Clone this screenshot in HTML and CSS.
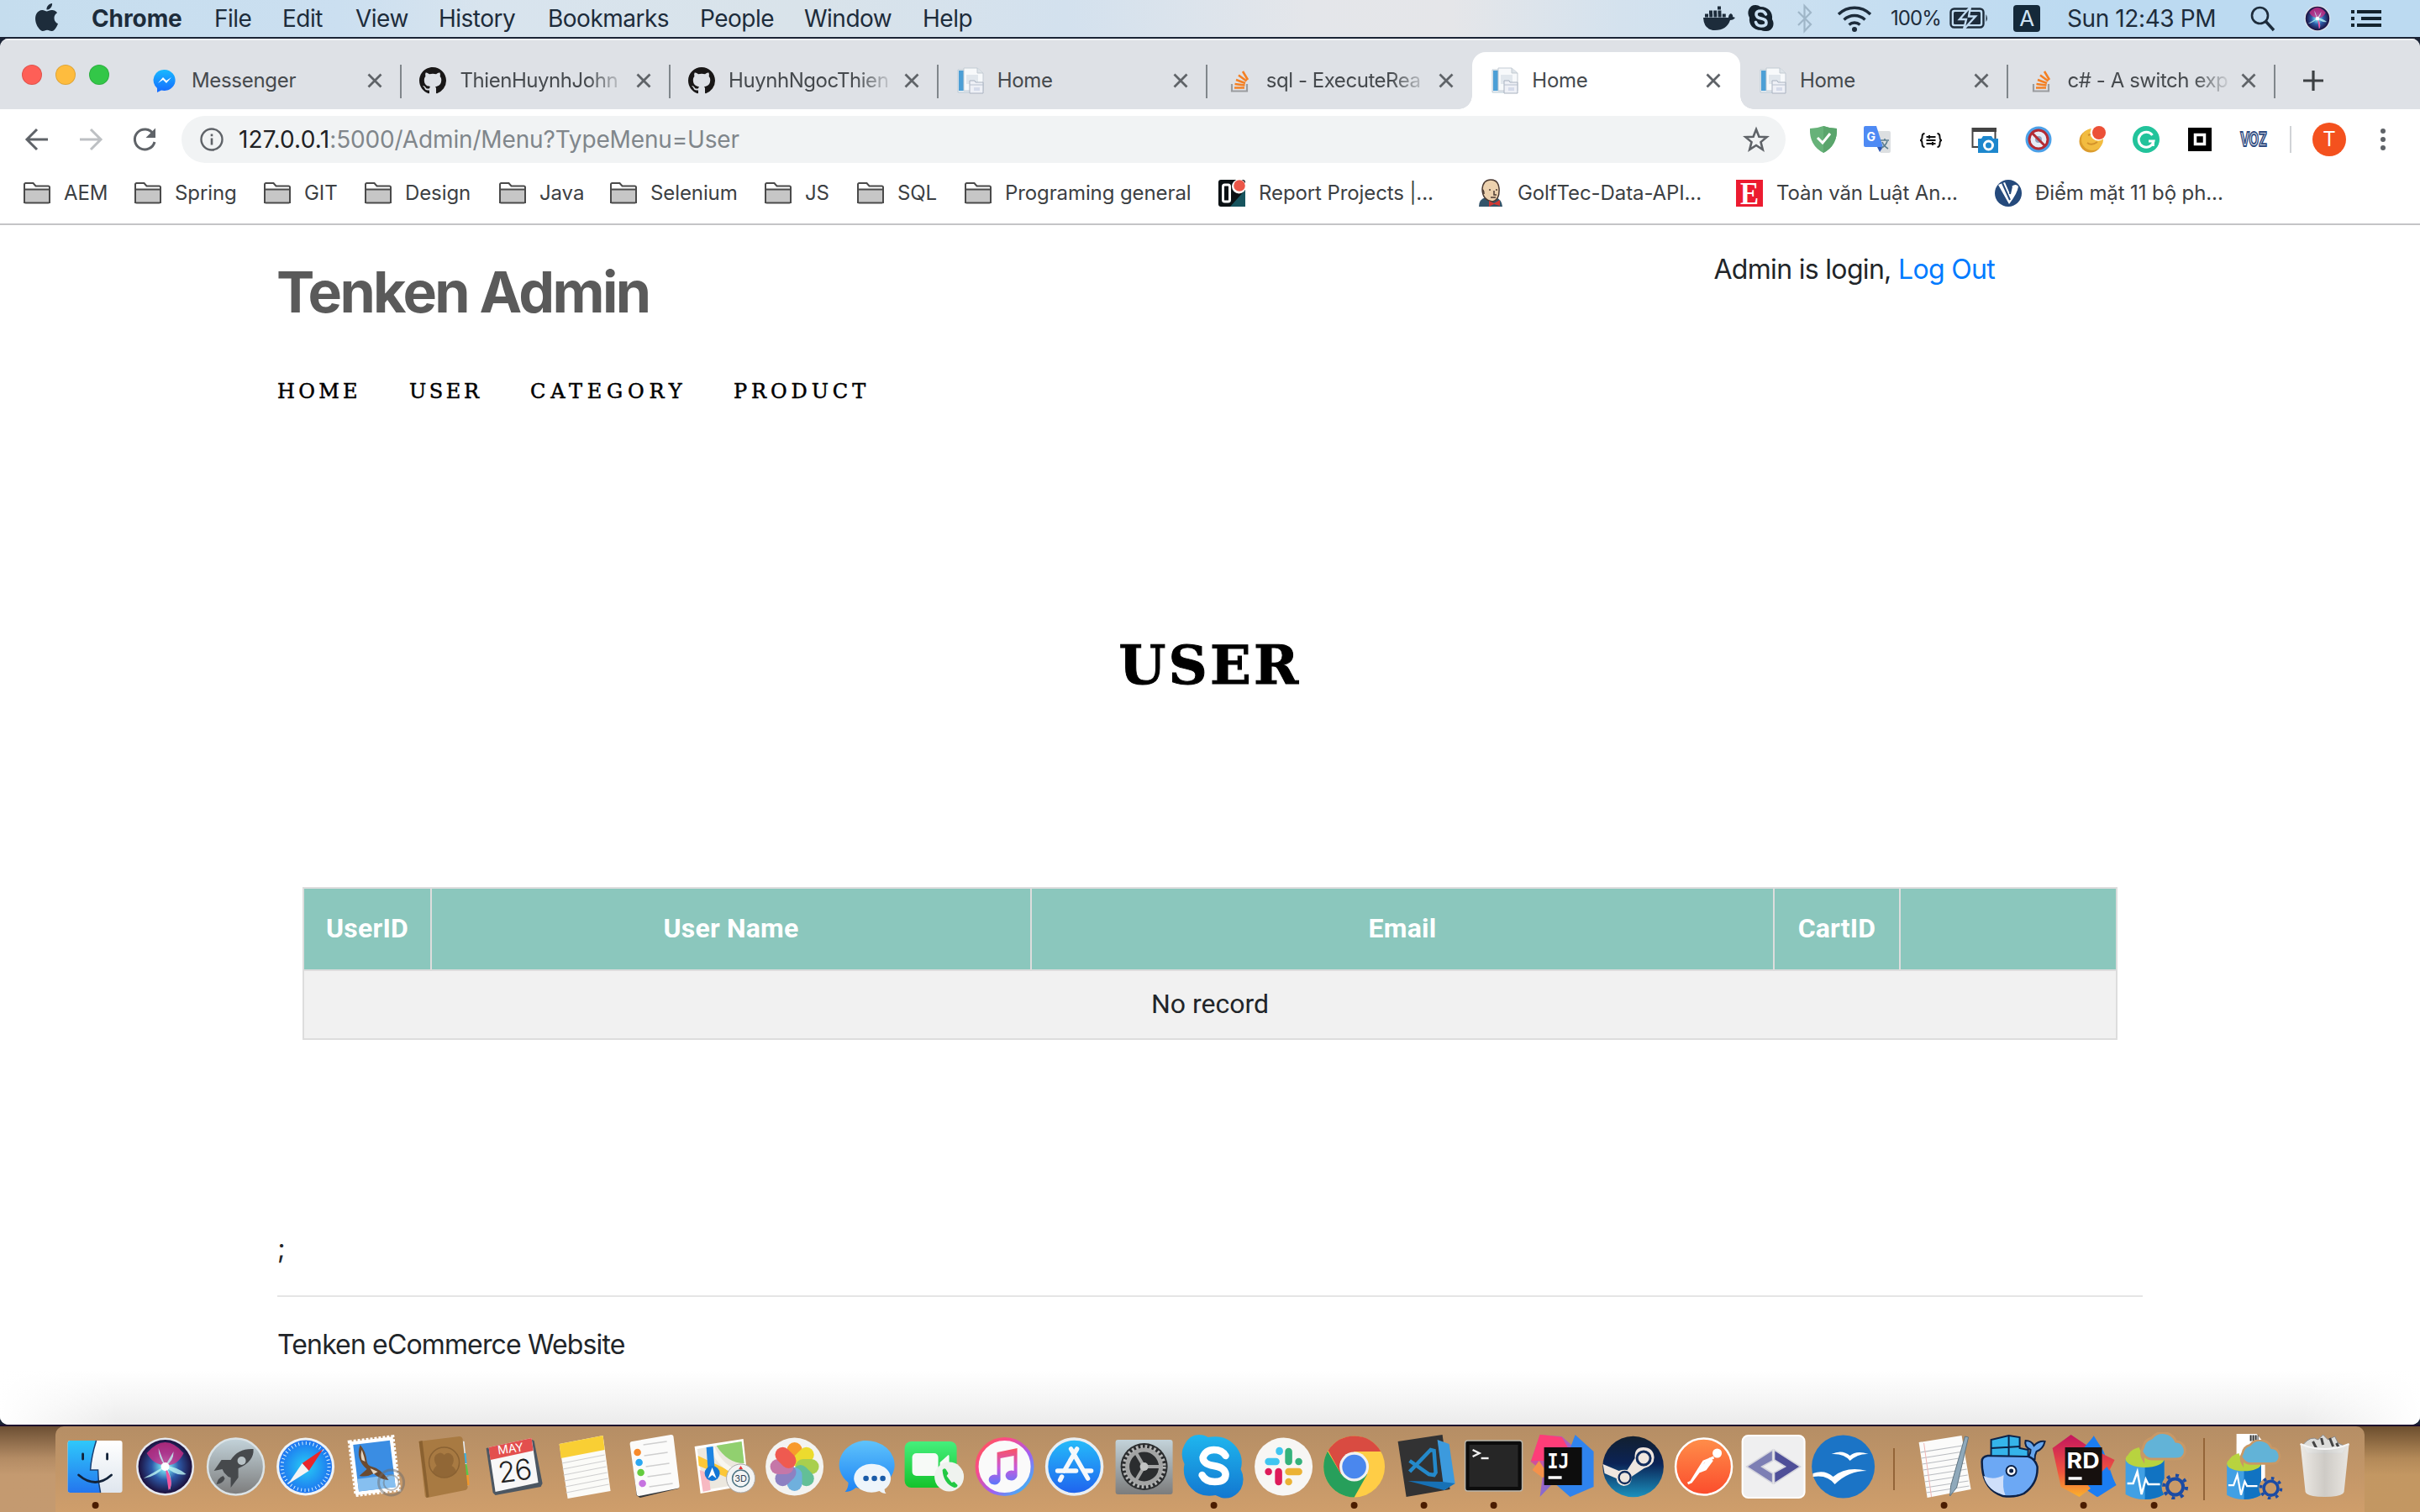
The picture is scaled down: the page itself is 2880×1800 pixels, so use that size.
FILE: index.html
```html
<!DOCTYPE html>
<html lang="en">
<head>
<meta charset="utf-8">
<title>Home</title>
<link rel="stylesheet" href="styles.css">
</head>
<body>
<svg class="defs" aria-hidden="true">
  <defs>
    <linearGradient id="gFinder" x1="0" y1="0" x2="0" y2="1"><stop offset="0" stop-color="#2fc8fb"/><stop offset="1" stop-color="#2476ee"/></linearGradient>
    <linearGradient id="gWhite" x1="0" y1="0" x2="0" y2="1"><stop offset="0" stop-color="#ffffff"/><stop offset="1" stop-color="#dfe6ee"/></linearGradient>
    <linearGradient id="gGrey" x1="0" y1="0" x2="0" y2="1"><stop offset="0" stop-color="#c3d3da"/><stop offset="1" stop-color="#7c7c7c"/></linearGradient>
    <linearGradient id="gBlue" x1="0" y1="0" x2="0" y2="1"><stop offset="0" stop-color="#25bdfa"/><stop offset="1" stop-color="#1f62ee"/></linearGradient>
    <linearGradient id="gMsg" x1="0" y1="0" x2="0" y2="1"><stop offset="0" stop-color="#5fc3fb"/><stop offset="1" stop-color="#1c83f5"/></linearGradient>
    <linearGradient id="gGreen" x1="0" y1="0" x2="0" y2="1"><stop offset="0" stop-color="#45ef7c"/><stop offset="1" stop-color="#14c32c"/></linearGradient>
    <linearGradient id="gSteam" x1="0" y1="0" x2="0" y2="1"><stop offset="0" stop-color="#12202f"/><stop offset=".45" stop-color="#0b2356"/><stop offset="1" stop-color="#1b91bd"/></linearGradient>
    <linearGradient id="gPost" x1="0" y1="0" x2="0" y2="1"><stop offset="0" stop-color="#ff8e4a"/><stop offset="1" stop-color="#fb4c2c"/></linearGradient>
    <linearGradient id="gSkype" x1="0" y1="0" x2="0" y2="1"><stop offset="0" stop-color="#1fb6ee"/><stop offset="1" stop-color="#1277d0"/></linearGradient>
    <linearGradient id="gTunes" x1="0" y1="0" x2="1" y2="1"><stop offset="0" stop-color="#ff5a52"/><stop offset=".3" stop-color="#f94a8c"/><stop offset=".6" stop-color="#a35cf2"/><stop offset="1" stop-color="#1fd0f6"/></linearGradient>
    <linearGradient id="gNote" x1="0" y1="0" x2="0" y2="1"><stop offset="0" stop-color="#fb5260"/><stop offset=".55" stop-color="#c65ade"/><stop offset="1" stop-color="#5a78fb"/></linearGradient>
    <linearGradient id="gIJ" x1="0" y1="0" x2="1" y2="1"><stop offset="0" stop-color="#fe3b6e"/><stop offset=".5" stop-color="#a563c4"/><stop offset="1" stop-color="#1c84f5"/></linearGradient>
    <linearGradient id="gRD" x1="0" y1="0" x2="0" y2="1"><stop offset="0" stop-color="#c4155e"/><stop offset=".6" stop-color="#f0543e"/><stop offset="1" stop-color="#fbb22c"/></linearGradient>
    <linearGradient id="gMess" x1="0" y1="0" x2="0" y2="1"><stop offset="0" stop-color="#19b9ff"/><stop offset="1" stop-color="#1569ff"/></linearGradient>
    <linearGradient id="gTrash" x1="0" y1="0" x2="1" y2="0"><stop offset="0" stop-color="#f0f0ee"/><stop offset=".5" stop-color="#cfcfcd"/><stop offset="1" stop-color="#ececea"/></linearGradient>
    <radialGradient id="gSiri"><stop offset="0" stop-color="#e8ffff"/><stop offset=".2" stop-color="#68c9e6"/><stop offset=".5" stop-color="#2d5aa8"/><stop offset="1" stop-color="#1b0f3c"/></radialGradient>
    <radialGradient id="gSafari"><stop offset="0" stop-color="#27cdf5"/><stop offset="1" stop-color="#1d74f0"/></radialGradient>

    <symbol id="close" viewBox="0 0 24 24"><path d="M4.500 4.500L19.500 19.500M19.500 4.500L4.500 19.500" stroke="#5f6368" stroke-width="2.800" fill="none"/></symbol>
    <symbol id="folder" viewBox="0 0 32 32">
      <path d="M1 27V5.500a1.500 1.500 0 0 1 1.500-1.500h9l3 3.500h15a1.500 1.500 0 0 1 1.500 1.500V27z" fill="#fff" stroke="#4a4a4a" stroke-width="2"/>
      <path d="M1 11.500h30V26a1.500 1.500 0 0 1-1.500 1.500h-27a1.500 1.500 0 0 1-1.500-1.500z" fill="#c6c6c6" stroke="#4a4a4a" stroke-width="2"/>
    </symbol>
    <symbol id="github" viewBox="0 0 16 16"><path fill="#191717" d="M8 0C3.580 0 0 3.580 0 8c0 3.540 2.290 6.530 5.470 7.590.4.070.55-.17.55-.38 0-.19-.01-.82-.01-1.490-2.010.37-2.530-.49-2.690-.94-.09-.23-.48-.94-.82-1.130-.28-.15-.68-.52-.01-.53.63-.01 1.080.58 1.230.82.72 1.210 1.870.87 2.330.66.070-.52.28-.87.51-1.070-1.780-.2-3.640-.89-3.640-3.950 0-.87.31-1.590.82-2.150-.08-.2-.36-1.020.08-2.120 0 0 .67-.21 2.200.82.64-.18 1.320-.27 2-.27s1.360.09 2 .27c1.530-1.040 2.200-.82 2.200-.82.44 1.100.16 1.920.08 2.120.51.56.82 1.270.82 2.150 0 3.070-1.870 3.750-3.650 3.950.29.25.54.73.54 1.480 0 1.070-.01 1.930-.01 2.200 0 .21.15.46.55.38A8.010 8.010 0 0 0 16 8c0-4.420-3.580-8-8-8z"/></symbol>
    <symbol id="pages" viewBox="0 0 32 32">
      <path d="M1 3h18v27H1z" fill="#e9eff4" stroke="#bccbd6"/><path d="M2 4h6v24H2z" fill="#4c9fd6"/>
      <path d="M8 1h16l7 6v21H8z" fill="#f7f9fb" stroke="#c3cbd3"/><path d="M24 1v6h7" fill="#dde3e8" stroke="#c3cbd3"/>
      <path d="M11 9h14v11H11z" fill="#e1e7ed"/>
      <path d="M15 16h6l1 2h9v13H15z" fill="#eef0f6" stroke="#a9b2c0"/><path d="M15 21h16" stroke="#b7c0ce"/><path d="M20 24h7v4h-7z" fill="#d5dbea"/>
    </symbol>
    <symbol id="stack" viewBox="0 0 32 32">
      <path d="M7 20v8.500h18V20" fill="none" stroke="#9a9c9f" stroke-width="2.200"/>
      <path d="M10 24.500h12M10.500 20l12 1.500M12 15l11 4M15 9.500l9.500 7M20 5l6 10" stroke="#f48024" stroke-width="2.600" fill="none"/>
    </symbol>
    <symbol id="siri" viewBox="-36 -36 72 72">
      <circle r="34.500" fill="#e6e9ef"/><circle r="32" fill="url(#gSiri)"/>
      <path d="M-22-16Q0-42 22-16Q14 0 0-2Q-14-2-22-16z" fill="#d52c86" opacity=".75"/>
      <path d="M0-1L-26 14Q-10 12 0-1L6 28Q10 12 0-1Q12 12 25 9Q14 0 0-1L-8-22Q-8-10 0-1L10-18Q10-6 0-1z" fill="#bff7f4" opacity=".8"/>
      <path d="M0 0L4 28Q12 20 0 0z" fill="#f0559f"/><circle r="5" fill="#fff"/>
    </symbol>
    <symbol id="db" viewBox="-40 -40 80 80">
      <path d="M-36-8v42q10 6 23 6 12 0 23-6V-8z" fill="#41a0e4"/><path d="M-13-8h23v42q-10 6-23 6z" fill="#1173c2"/>
      <ellipse cx="-13" cy="-8" rx="23" ry="10" fill="#b8d33f"/>
      <path d="M-34-10q2-9 14-12l6 14z" fill="#b8d33f"/>
      <path d="M-15-8a14 14 0 0 1 0-14 14 14 0 0 1 10-11 17 17 0 0 1 29 4 11 11 0 0 1 6 20q-3 1-7 1h-28q-6 0-10-6z" fill="#62b3d7" stroke="#c89866" stroke-width="3"/>
      <path d="M-34 21h7l5-14 5 27 5-18 3 6h14" fill="none" stroke="#fff" stroke-width="2.500"/>
      <circle cx="23" cy="25" r="16" fill="#c99a68"/>
      <circle cx="23" cy="25" r="9.500" fill="none" stroke="#1b4ba4" stroke-width="4"/>
      <circle cx="23" cy="25" r="13.500" fill="none" stroke="#1b4ba4" stroke-width="4" stroke-dasharray="4 6.600"/>
    </symbol>
  </defs>
</svg>

<header class="menubar">
  <svg class="apple" viewBox="0 0 24 24"><path fill="#1d2c3b" d="M12.152 6.896c-.948 0-2.415-1.078-3.960-1.040-2.040.027-3.910 1.183-4.961 3.014-2.117 3.675-.546 9.103 1.519 12.090 1.013 1.454 2.208 3.090 3.792 3.039 1.520-.065 2.090-.987 3.935-.987 1.831 0 2.350.987 3.960.948 1.637-.026 2.676-1.480 3.676-2.948 1.156-1.688 1.636-3.325 1.662-3.415-.039-.013-3.182-1.221-3.220-4.857-.026-3.040 2.480-4.494 2.597-4.559-1.429-2.090-3.623-2.324-4.390-2.376-2-.156-3.675 1.090-4.610 1.090zM15.530 3.830c.843-1.012 1.400-2.427 1.245-3.830-1.207.052-2.662.805-3.532 1.818-.78.896-1.454 2.338-1.273 3.714 1.338.104 2.715-.688 3.559-1.701"/></svg>
  <b class="app">Chrome</b><span>File</span><span>Edit</span><span>View</span><span>History</span><span>Bookmarks</span><span>People</span><span>Window</span><span>Help</span>
  <svg width="38" height="32" viewBox="0 0 38 32"><path fill="#1d2c3b" d="M0 15h30q0-4 3-5 3 2 2 4l3 1q-2 3-6 3Q28 30 14 30 1 30 0 15z"/><path d="M2 12.500h25M7 8.500h15M17 3.500h5" stroke="#1d2c3b" stroke-width="4" stroke-dasharray="4 1.200"/></svg>
  <svg width="32" height="34" viewBox="0 0 32 34"><path fill="#15222e" d="M9 1a9 9 0 0 1 6 2c10 0 15 7 14 15 4 6 0 15-8 14a9 9 0 0 1-5-1C6 31 1 24 2 16-2 9 2 1 9 1z"/><path d="M21.500 12q-2-4-6-4-5.500 0-5.500 4t6 5q6 1 6 5t-6 4q-5 0-6.500-4.500" fill="none" stroke="#c9dff1" stroke-width="3.600" stroke-linecap="round"/></svg>
  <svg width="20" height="34" viewBox="0 0 20 34"><path d="M2 9l15 15-7.500 8V2L17 10 2 25" fill="none" stroke="#9fb6c8" stroke-width="2.200"/></svg>
  <svg width="42" height="32" viewBox="0 0 42 32"><path d="M2 11a27 27 0 0 1 38 0M8.500 17.500a18 18 0 0 1 25 0M14.500 23.500a9.500 9.500 0 0 1 13 0" fill="none" stroke="#1d2c3b" stroke-width="3.400"/><circle cx="21" cy="29" r="3" fill="#1d2c3b"/></svg>
  <span class="pct">100%</span>
  <svg width="47" height="28" viewBox="0 0 47 28"><rect x="1.500" y="2.500" width="39" height="22" rx="4" fill="none" stroke="#1d2c3b" stroke-width="2.400"/><rect x="5" y="6" width="32" height="15" rx="1.500" fill="#1d2c3b"/><path d="M25 0L12 15h8l-3 12L31 11.500h-8z" fill="#1d2c3b" stroke="#c2dcf2" stroke-width="2.400"/><path d="M43.500 9q3 5 0 9z" fill="#1d2c3b"/></svg>
  <span class="badge">A</span>
  <span class="clock">Sun 12:43 PM</span>
  <svg width="30" height="32" viewBox="0 0 30 32"><circle cx="11.500" cy="12.500" r="9.500" fill="none" stroke="#1d2c3b" stroke-width="2.600"/><path d="M18.500 19.500L28 30" stroke="#1d2c3b" stroke-width="3.400"/></svg>
  <svg width="32" height="32"><use href="#siri"/></svg>
  <svg width="37" height="24" viewBox="0 0 37 24"><path d="M0 4h4M7 4h29M0 12h4M12 12h24M0 20h4M7 20h29" stroke="#14242f" stroke-width="4"/></svg>
</header>

<main class="window">
  <div class="tabstrip">
    <div class="lights"><i class="red"></i><i class="amber"></i><i class="green"></i></div>
    <div class="tab wide"><svg class="fav" viewBox="0 0 32 32"><path fill="url(#gMess)" d="M16 3a13 12.500 0 1 1-4 24.500L7 30v-5A12.500 12.500 0 0 1 16 3z"/><path d="M8 19l6-7 4 4 6-4-6 7-4-4z" fill="#fff"/></svg><span>Messenger</span><svg class="x"><use href="#close"/></svg></div>
    <div class="tab wide fade"><svg class="fav"><use href="#github"/></svg><span>ThienHuynhJohn</span><svg class="x"><use href="#close"/></svg></div>
    <div class="tab wide fade"><svg class="fav"><use href="#github"/></svg><span>HuynhNgocThien</span><svg class="x"><use href="#close"/></svg></div>
    <div class="tab wide"><svg class="fav"><use href="#pages"/></svg><span>Home</span><svg class="x"><use href="#close"/></svg></div>
    <div class="tab narrow fade"><svg class="fav"><use href="#stack"/></svg><span>sql - ExecuteRea</span><svg class="x"><use href="#close"/></svg></div>
    <div class="tab active"><svg class="fav"><use href="#pages"/></svg><span>Home</span><svg class="x"><use href="#close"/></svg></div>
    <div class="tab"><svg class="fav"><use href="#pages"/></svg><span>Home</span><svg class="x"><use href="#close"/></svg></div>
    <div class="tab fade"><svg class="fav"><use href="#stack"/></svg><span>c# - A switch exp</span><svg class="x"><use href="#close"/></svg></div>
    <svg class="plus" viewBox="0 0 26 26"><path d="M13 1v24M1 13h24" stroke="#3c4043" stroke-width="3.200"/></svg>
  </div>

  <div class="toolbar">
    <svg class="nav" viewBox="0 0 32 32"><path d="M29 16H4M16 4L4 16l12 12" fill="none" stroke="#5f6368" stroke-width="3"/></svg>
    <svg class="nav" viewBox="0 0 32 32"><path d="M3 16h25M16 4l12 12-12 12" fill="none" stroke="#bdc0c3" stroke-width="3"/></svg>
    <svg class="nav" viewBox="0 0 32 32"><path d="M26.500 9.500A12 12 0 1 0 28 19" fill="none" stroke="#5f6368" stroke-width="3"/><path d="M29 2.500V14H17.500z" fill="#5f6368"/></svg>
    <div class="omnibox">
      <svg width="28" height="28" viewBox="0 0 28 28"><circle cx="14" cy="14" r="12.500" fill="none" stroke="#5f6368" stroke-width="2.400"/><path d="M14 12.500v8M14 7.500v2.800" stroke="#5f6368" stroke-width="2.600"/></svg>
      <div class="url"><b>127.0.0.1</b>:5000/Admin/Menu?TypeMenu=User</div>
      <svg width="32" height="32" viewBox="0 0 32 32"><path d="M16 4l3.400 8.700 9.200.5-7.100 5.900 2.300 9L16 23l-7.800 5.100 2.300-9-7.100-5.900 9.200-.5z" fill="none" stroke="#5f6368" stroke-width="2.600"/></svg>
    </div>
    <div class="exts">
      <svg viewBox="0 0 32 32"><path d="M16 0q8 3 16 3 1 20-16 29Q-1 23 0 3q8 0 16-3z" fill="#67b279"/><path d="M16 0q8 3 16 3 1 20-16 29z" fill="#5aa56c"/><path d="M9 14l6 6 9-11" fill="none" stroke="#fff" stroke-width="3"/></svg>
      <svg viewBox="0 0 32 32"><path d="M12 6h18a2 2 0 0 1 2 2v22a2 2 0 0 1-2 2H20z" fill="#dcdfe1"/><path d="M16 25h7l-4 6z" fill="#3059b5"/><path d="M2 0h13l8 25H2a2 2 0 0 1-2-2V2a2 2 0 0 1 2-2z" fill="#4e8af4"/><text x="3.500" y="18" font-size="14" font-weight="700" fill="#fff">G</text><path d="M20 17h10M25 15v2M28 18q-2 6-7 8M22 19q2 5 7 8" stroke="#5e7f91" stroke-width="1.700" fill="none"/></svg>
      <svg viewBox="0 0 32 32"><path d="M8.500 9q-3 0-3 4t-2.500 4q2.500 0 2.500 4t3 4M23.500 9q3 0 3 4t2.500 4q-2.500 0-2.500 4t-3 4M10.500 13h11M10.500 17h11M10.500 21h11M14 11v4M18 19v4" fill="none" stroke="#111" stroke-width="2"/></svg>
      <svg viewBox="0 0 32 32"><path d="M1.500 3h27v22h-27z" fill="#fff" stroke="#444" stroke-width="2"/><path d="M1 2h29v5H1z" fill="#444"/><path d="M8 15h4l2-3h10l2 3h6v17H8z" fill="#1d87cd"/><circle cx="20.500" cy="23" r="5" fill="none" stroke="#fff" stroke-width="3"/></svg>
      <svg viewBox="0 0 32 32"><circle cx="16" cy="16" r="15.500" fill="#4ba0e8"/><circle cx="16" cy="16" r="11" fill="#e6ebf5" stroke="#b32b33" stroke-width="3"/><circle cx="16" cy="16" r="4" fill="#8fa2bd"/><path d="M8 8l16 16" stroke="#b32b33" stroke-width="3"/></svg>
      <svg viewBox="0 0 32 32"><circle cx="14" cy="18" r="13.500" fill="#dc9c2c"/><circle cx="16" cy="16" r="13" fill="#f2bc40"/><path d="M11 11q6-3 10 1M10 20q5 4 12-1" stroke="#d2912a" stroke-width="2" fill="none"/><circle cx="23" cy="8" r="9.500" fill="#fff"/><circle cx="24" cy="8" r="8" fill="#ec5037"/></svg>
      <svg viewBox="0 0 32 32"><circle cx="16" cy="16" r="16" fill="#22c39b"/><path d="M23.500 11A9 9 0 1 0 25 18h-6" fill="none" stroke="#fff" stroke-width="3"/><path d="M24.500 18v6" stroke="#fff" stroke-width="2.600"/></svg>
      <svg viewBox="0 0 32 32"><path d="M2 2h28v28H2z"/><path d="M10.500 10.500h11v11h-11z" stroke="#fff" stroke-width="3.500"/></svg>
      <svg viewBox="0 0 32 32"><text x="0" y="24" font-size="23" font-weight="700" textLength="32" lengthAdjust="spacingAndGlyphs" fill="#fff" stroke="#2e4a80" stroke-width="2">VOZ</text></svg>
    </div>
    <i class="divider"></i>
    <span class="avatar">T</span>
    <svg width="8" height="32" viewBox="0 0 8 32"><g fill="#5f6368"><circle cx="4" cy="6" r="3"/><circle cx="4" cy="16" r="3"/><circle cx="4" cy="26" r="3"/></g></svg>
  </div>

  <div class="bookmarks">
    <div><svg><use href="#folder"/></svg>AEM</div>
    <div><svg><use href="#folder"/></svg>Spring</div>
    <div><svg><use href="#folder"/></svg>GIT</div>
    <div><svg><use href="#folder"/></svg>Design</div>
    <div><svg><use href="#folder"/></svg>Java</div>
    <div><svg><use href="#folder"/></svg>Selenium</div>
    <div><svg><use href="#folder"/></svg>JS</div>
    <div><svg><use href="#folder"/></svg>SQL</div>
    <div><svg><use href="#folder"/></svg>Programing general</div>
    <div><svg viewBox="0 0 32 32"><rect width="32" height="32" rx="3" fill="#0b1114"/><path d="M32 12v20H14z" fill="#17545e"/><rect x="5.500" y="6" width="8" height="20" rx="2" fill="none" stroke="#fff" stroke-width="3"/><circle cx="24.500" cy="8" r="8.500" fill="#fff"/><circle cx="25" cy="7" r="6.800" fill="#ec5648"/></svg>Report Projects |...</div>
    <div><svg viewBox="0 0 32 32"><path d="M2 32q0-9 8-11h12q7 2 8 11z" fill="#33546a"/><path d="M6 11Q7 0 16 0t10 10q1 14-8 16-12-2-12-15z" fill="#ecd1ae" stroke="#4b3a32" stroke-width="1.500"/><path d="M6 12q2 0 2 5M14 12h2M22 12h2M20 13v5h3M16 21h6" stroke="#4b3a32" stroke-width="1.500" fill="none"/><path d="M14 25l6 3 7-4v7l-7-2-6 3z" fill="#d33833"/></svg>GolfTec-Data-API...</div>
    <div><svg viewBox="0 0 32 32"><path d="M0 0h32v32H0z" fill="#ec1b30"/><text x="5" y="28.500" class="serif" font-size="38" font-weight="700" textLength="22" lengthAdjust="spacingAndGlyphs" fill="#fff">E</text></svg>Toàn văn Luật An...</div>
    <div><svg viewBox="0 0 32 32"><circle cx="16" cy="16" r="16" fill="#254a7c"/><path d="M4 6l8-3 6 14 2-9q5-4 8 0-1 8-11 21z" fill="#fff"/><path d="M9 4l9 20M20 8l-2 9" stroke="#254a7c" stroke-width="2"/></svg>Điểm mặt 11 bộ ph...</div>
  </div>

  <div class="page">
    <div class="top">
      <h1>Tenken Admin</h1>
      <p>Admin is login, <a>Log Out</a></p>
    </div>
    <nav class="links"><a class="home">Home</a><a class="user">User</a><a class="category">Category</a><a class="product">Product</a></nav>
    <h2>User</h2>
    <table>
      <colgroup><col class="c1"><col class="c2"><col class="c3"><col class="c4"><col class="c5"></colgroup>
      <thead><tr><th>UserID</th><th>User Name</th><th>Email</th><th>CartID</th><th></th></tr></thead>
      <tbody><tr><td colspan="5">No record</td></tr></tbody>
    </table>
    <p class="stray">;</p>
    <footer>Tenken eCommerce Website</footer>
  </div>
</main>

<div class="desktop">
<div class="dock">
  <svg viewBox="-41.600 -48 83.200 102"><rect x="-33" y="-31" width="65" height="62" rx="3" fill="url(#gWhite)"/><path d="M-30-31H1Q-5-12-6 4h9Q3 18 6 31h-36q-3 0-3-3v-56q0-3 3-3z" fill="url(#gFinder)"/><path d="M1-31Q-5-12-6 4h9Q3 18 6 31" fill="none" stroke="#1a3f72" stroke-width="1.500"/><path d="M-15-15v6M14-15v6M-20 10Q0 27 19 10" fill="none" stroke="#122238" stroke-width="2.800" stroke-linecap="round"/><circle class="run" cy="46" r="4"/></svg>
  <svg viewBox="-41.600 -48 83.200 102"><use href="#siri" x="-36" y="-36" width="72" height="72"/></svg>
  <svg viewBox="-41.600 -48 83.200 102"><circle r="33.500" fill="url(#gGrey)" stroke="#dbe3e6" stroke-width="2.500"/><path d="M21-21Q3-22-6-8l-11 0-9 13 10-2 2 4 5 5 3 1 0 12 9-12V2Q22-6 21-21z" fill="#46494c"/><path d="M-15 11q-6 2-8 10 8-1 10-7z" fill="#46494c"/><circle cx="7" cy="-7" r="5" fill="#b8c2c6"/></svg>
  <svg viewBox="-41.600 -48 83.200 102"><circle r="34.500" fill="#eef2f5"/><circle r="31.500" fill="url(#gSafari)"/><circle r="28" fill="none" stroke="#d8f0fc" stroke-width="4" stroke-dasharray="1 3.400"/><path d="M21-21L4 5-4-4z" fill="#e8262b"/><path d="M-21 21L4 5-4-4z" fill="#f4f4f4"/></svg>
  <svg viewBox="-41.600 -48 83.200 102"><g transform="rotate(-7)"><path d="M-27-33h52v64h-52z" fill="#fff" stroke="#fff" stroke-width="4" stroke-dasharray="3 2"/><path d="M-23-29h44v56h-44z" fill="#3a8de3"/><path d="M-23 12h44v15h-44z" fill="#86bff0"/></g><path d="M-18-26q7 8 8 20 1 5 6 6 10 2 20 16-11-1-18-8-8 5-17 3l9-8q-14-12-8-29z" fill="#6b4a30"/><path d="M-16-20q3 8 4 14l-4-2q-2-6 0-12zM-6 2l9 4-5 3z" fill="#e5d6c2"/><circle cx="19" cy="19" r="15" fill="none" stroke="#6b6b6b" stroke-width="3" opacity=".5"/><circle cx="19" cy="19" r="9" fill="none" stroke="#6b6b6b" stroke-width="2" opacity=".45"/></svg>
  <svg viewBox="-41.600 -48 83.200 102"><path d="M18-31l5 1 5 52-8 4z" fill="#e6e9ec"/><path d="M21-16l4 0 1 12-4 0z" fill="#3dafe0"/><path d="M22-3l4 0 2 13-4 0z" fill="#58c949"/><path d="M24 10l4 0 1 12-5 1z" fill="#f2992a"/><path d="M-31-30L17-36q3 0 4 3l6 57q0 3-3 4l-45 9q-3 0-3-4z" fill="#a87a42"/><path d="M-31-30l4-1 8 67-3 1z" fill="#8a6130"/><circle cx="-1" cy="-5" r="18" fill="none" stroke="#8a6233" stroke-width="1.500"/><path d="M-15 7q2-6 5-8-5-8-1-13 6-5 10 0 5-5 10 1 3 6-1 12 4 2 6 8-7 6-13 6-9 0-16-6z" fill="#8a6233" opacity=".75"/></svg>
  <svg viewBox="-41.600 -48 83.200 102"><path d="M-34-22l52-11 5 2 10 51-2 4-54 10-3-3z" fill="#4c5762"/><path d="M-31-23L20-34l8 53-51 11z" fill="#f8f8f8"/><path d="M-31-23L20-34l2 15-51 11z" fill="#e34f4e"/><g transform="rotate(-8)" text-anchor="middle"><text x="-2" y="-17" font-size="14" fill="#fff">MAY</text><text x="-1" y="17" font-size="34" font-weight="300" fill="#222" letter-spacing="-1">26</text></g></svg>
  <svg viewBox="-41.600 -48 83.200 102"><path d="M-31-27L21-37l9 66-51 9z" fill="#fbfbf8"/><path d="M-31-27L21-37l2 17-52 10z" fill="#f9cf34"/><path d="M-28-4l51-10M-27 3l51-10M-26 10l51-10M-25 17L26 7M-24 24l51-10M-23 31l51-10" stroke="#cfcfcf" stroke-width="1.200"/></svg>
  <svg viewBox="-41.600 -48 83.200 102"><path d="M-29-28L20-34l8 60-46 11-4-3z" fill="#34373a"/><path d="M-27-30l46-8q3 0 3 3l7 58q0 3-3 3l-45 9q-3 0-3-3l-8-59q0-3 3-3z" fill="#fbfbfa"/><path d="M-14-26l28-4M-13-13l28-4M-11 0l28-4M-9 12l28-4M-7 24l28-4" stroke="#cfcfcf" stroke-width="1.300"/><circle cx="-21" cy="-17" r="4.300" fill="#f88a2a"/><circle cx="-19" cy="-5" r="4.300" fill="#2ba8f2"/><circle cx="-17" cy="7" r="4.300" fill="#64cc3e"/><circle cx="-15" cy="20" r="4.300" fill="#c673e0"/></svg>
  <svg viewBox="-41.600 -48 83.200 102"><path d="M-36-24l58-9 6 55-57 10z" fill="#fff"/><path d="M-33-21l53-9 5 50-50 8z" fill="#ece8df"/><path d="M-10-25l30-5 3 26q-20 0-33-21z" fill="#91d06f"/><path d="M-32-13L21 12l1 9-53-22z" fill="#fcc736"/><path d="M-30 4l11 4 2 20-9 2z" fill="#f7b9c2"/><path d="M-16-25q12 30 38 33" fill="none" stroke="#f8f6f0" stroke-width="6"/><path d="M-22-23l8-1 2 28-8 1z" fill="#1d84e2"/><circle cx="-15" cy="8" r="9" fill="#1477d6"/><path d="M-15 1l5 13-5-4-5 4z" fill="#fff"/><circle cx="19" cy="14" r="17" fill="#f3f4f4" stroke="#aaa"/><circle cx="19" cy="14" r="10" fill="none" stroke="#4e7585" stroke-width="1.500"/><text x="19" y="18" font-size="11" text-anchor="middle" fill="#345">3D</text><path d="M19-1l2.500 4h-5z" fill="#e33"/></svg>
  <svg viewBox="-41.600 -48 83.200 102"><circle r="34.500" fill="#f3f3f1"/><g class="petals"><rect x="-9" y="-29" width="18" height="28" rx="9" fill="#f89a2c"/><rect x="-9" y="-29" width="18" height="28" rx="9" fill="#ecdb2e" transform="rotate(45)"/><rect x="-9" y="-29" width="18" height="28" rx="9" fill="#a9cf4e" transform="rotate(90)"/><rect x="-9" y="-29" width="18" height="28" rx="9" fill="#63bf97" transform="rotate(135)"/><rect x="-9" y="-29" width="18" height="28" rx="9" fill="#6fb0dd" transform="rotate(180)"/><rect x="-9" y="-29" width="18" height="28" rx="9" fill="#8d81c2" transform="rotate(225)"/><rect x="-9" y="-29" width="18" height="28" rx="9" fill="#c577a8" transform="rotate(270)"/><rect x="-9" y="-29" width="18" height="28" rx="9" fill="#ef5a50" transform="rotate(315)"/></g></svg>
  <svg viewBox="-41.600 -48 83.200 102"><path d="M-1-31a34 29 0 1 1-9 56q-6 5-13 5 4-4 4-11A34 29 0 0 1-1-31z" fill="url(#gMsg)"/><path d="M12-3a21 17 0 0 1 12 30q0 3 2 5-5 0-8-3A21 17 0 1 1 12-3z" fill="#eef5fb"/><g fill="#1a5ba8"><circle cx="2" cy="14" r="3.300"/><circle cx="12" cy="14" r="3.300"/><circle cx="22" cy="14" r="3.300"/></g></svg>
  <svg viewBox="-41.600 -48 83.200 102"><rect x="-35" y="-30" width="62" height="55" rx="8" fill="url(#gGreen)"/><rect x="-26" y="-16" width="31" height="27" rx="5" fill="#f7faf7"/><path d="M7-5l10-9q1 0 1 2V8q0 2-1 2L7 2z" fill="#f7faf7"/><circle cx="18" cy="12" r="17.500" fill="#eff3ef"/><path d="M10 4q2-3 4-1l3 5-2 3 6 8 3-1 4 4q0 3-4 3Q11 20 10 4z" fill="#22c944"/></svg>
  <svg viewBox="-41.600 -48 83.200 102"><circle r="33" fill="#fafafa" stroke="url(#gTunes)" stroke-width="4"/><path d="M-9-17L15-22V11a7 6 0 1 1-4-6V-13L-5-10V16a7 6 0 1 1-4-6z" fill="url(#gNote)"/></svg>
  <svg viewBox="-41.600 -48 83.200 102"><circle r="33" fill="url(#gBlue)" stroke="#e9eef2" stroke-width="3.500"/><path d="M3-21L-12 5M-15 12l-2 4M-4-21L16 14M-20 5H2M12 5h8" stroke="#f5f8fb" stroke-width="5.500" stroke-linecap="round" fill="none"/></svg>
  <svg viewBox="-41.600 -48 83.200 102"><rect x="-34" y="-32" width="68" height="65" rx="3" fill="url(#gGrey)"/><circle r="28" fill="#2b2d2f"/><circle r="20" fill="none" stroke="#a3a4a4" stroke-width="5"/><circle r="24" fill="none" stroke="#b5b6b6" stroke-width="4" stroke-dasharray="2.700 2.700"/><path d="M0 0h20M0 0l-10-17M0 0l-10 17" stroke="#a3a4a4" stroke-width="4"/><circle r="5" fill="#c3c4c4"/></svg>
  <svg viewBox="-41.600 -48 83.200 102"><path d="M-18-38q7 0 11 3 22-4 34 12 9 12 5 26 6 12 0 24-9 13-23 10l-7-3q-20 4-32-12-8-12-5-25-6-12 0-23 6-12 17-12z" fill="url(#gSkype)"/><path d="M14-13Q10-20 0-20t-13 9Q-13-3 0-1t14 10q0 9-13 9-11 0-15-8" fill="none" stroke="#fff" stroke-width="8.500" stroke-linecap="round"/><circle class="run" cy="46" r="4"/></svg>
  <svg viewBox="-41.600 -48 83.200 102"><circle r="34.500" fill="#f7f6f4"/><g fill="none" stroke-width="8.500" stroke-linecap="round"><path d="M-18-6h9M-5-18v-1" stroke="#40c5f0"/><path d="M6-18v12M18-6v0" stroke="#34b27b"/><path d="M18 6H6M6 18v0" stroke="#ebb235"/><path d="M-6 18V6M-18 6v0" stroke="#de1b5a"/></g></svg>
  <svg viewBox="-41.600 -48 83.200 102"><circle r="36.500" fill="#ffcd46"/><path d="M-31.600-18.200A36.500 36.500 0 0 0 0 36.500L15.600 9-15.600 9z" fill="#279f5b"/><path d="M-31-19.300A36.500 36.500 0 0 1 31.800-18H0L-15.600 9z" fill="#d94b41"/><circle r="17.500" fill="#f1f1f1"/><circle r="14.300" fill="#4a87ee"/><circle class="run" cy="46" r="4"/></svg>
  <svg viewBox="-41.600 -48 83.200 102"><path d="M-31-30L22-38l9 65-52 9z" fill="#323233"/><path d="M16-32l14 5 7 47-13 8z" fill="#3c9add"/><path d="M-19 17L22 18l15 2-13 8z" fill="#1771b5"/><path d="M-17 6L8-20l4 1 2 26-2 3-6-1-23-16" fill="none" stroke="#2489ca" stroke-width="4.500"/><circle class="run" cy="46" r="4"/></svg>
  <svg viewBox="-41.600 -48 83.200 102"><rect x="-34" y="-31" width="68" height="60" rx="3" fill="#0c0c0c" stroke="#b9b5ab" stroke-width="1.500"/><rect x="-29" y="-26" width="58" height="50" fill="#262626"/><path d="M-25-20l8 4-8 4" fill="none" stroke="#f2f2f2" stroke-width="2.400"/><path d="M-15-10h9" stroke="#f2f2f2" stroke-width="2.400"/><circle class="run" cy="46" r="4"/></svg>
  <svg viewBox="-41.600 -48 83.200 102"><path d="M-28-38l26 2 16 14-20 35-22 23 4-30-15-12z" fill="url(#gIJ)"/><path d="M-28-38l26 3 12 20-30 8h-18z" fill="#fe3d78"/><path d="M-29-7l12 18-8 2-12-9z" fill="#f5914a"/><path d="M14-38l22 20v42L8 36-8 22z" fill="#2f83ee"/><rect x="-23" y="-23" width="45" height="45" fill="#0d0d0d"/><text x="-19" y="2" font-size="25" font-weight="700" fill="#fff" class="mono" textLength="26" lengthAdjust="spacingAndGlyphs">IJ</text><path d="M-18 13h16" stroke="#fff" stroke-width="3.500"/></svg>
  <svg viewBox="-41.600 -48 83.200 102"><circle r="36.300" fill="url(#gSteam)"/><path d="M-36-3L-17 5q5-2 10-1L2-10q-1-13 10-13 12 0 13 12 0 10-12 13L-2 12q1 10-9 11-8-1-9-9l-14-6z" fill="#efe6df"/><circle cx="12.500" cy="-10" r="8" fill="#efe6df" stroke="#122c5c" stroke-width="3"/><circle cx="-10" cy="13" r="7" fill="none" stroke="#122c5c" stroke-width="2.300"/></svg>
  <svg viewBox="-41.600 -48 83.200 102"><circle r="33.500" fill="url(#gPost)" stroke="#fff" stroke-width="2.500"/><circle cx="16" cy="-16" r="5.500" fill="#fff"/><path d="M12-11L0-6-7 5-15 18l-4 2M10-8L2 3-6 6-15 18" fill="none" stroke="#fff" stroke-width="3"/><path d="M9-9L-4 4" stroke="#fff" stroke-width="5"/></svg>
  <svg viewBox="-41.600 -48 83.200 102"><rect x="-37" y="-37" width="74" height="74" rx="7" fill="#efeff0" stroke="#fff" stroke-width="2"/><path d="M-1-20v13L-14 0-1 8v12L-32 0z" fill="#7d7fb4" stroke="#d5d5dd" stroke-width="1.500"/><path d="M1 20V7l13-7L1-8v-12L32 0z" fill="#4f4f98" stroke="#d5d5dd" stroke-width="1.500"/></svg>
  <svg viewBox="-41.600 -48 83.200 102"><circle r="37.500" fill="#1b74c6"/><path d="M-14-15q13-6 22 2 8-7 22-2-12-1-22 8-7-9-22-8zM-36 8q14-5 24 4Q4-1 28 5 6 5-10 21q-9-12-26-9z" fill="#fff"/></svg>
  <i class="sep"></i>
  <svg viewBox="-41.600 -48 83.200 102"><path d="M-30-29L21-37l11 64-52 10z" fill="#fbfbfa"/><path d="M-28-17l50-8M-27-10l50-8M-26-3l50-8M-25 4l50-8M-24 11l51-8M-23 18l51-8M-22 25l51-8M-21 31l51-8" stroke="#b9bcc0" stroke-width="1.200"/><path d="M-24-28l9 64" stroke="#f0b6b6"/><path d="M25-36l4 1-14 60-8 10 1-12z" fill="#8fa9bb" stroke="#5f7482"/><circle class="run" cy="46" r="4"/></svg>
  <svg viewBox="-41.600 -48 83.200 102"><path d="M12-8Q20-12 20-20 12-24 14-31q7 0 10 6 6-6 13-5-2 9-10 12-2 4-2 9z" fill="#66a6ee" stroke="#0c2248" stroke-width="2"/><path d="M-38-6q0-6 7-7h42q13 0 17 13 1 20-16 32-10 5-25 3-25-8-25-41z" fill="#6ca8f4" stroke="#0c2248" stroke-width="2.500"/><path d="M-36 11q12 6 24-1-2 16 2 24-21-4-26-23z" fill="#cfdffa"/><circle cx="-3" cy="5" r="6" fill="#fff" stroke="#0c2248" stroke-width="2"/><circle cx="-3" cy="5" r="2.500" fill="#0c2248"/><path d="M-27-13v-19l21-5 13 2v13l10 2v8z" fill="#35b4ea" stroke="#0c2248" stroke-width="2"/><path d="M-27-22L7-24M-6-37v24" stroke="#0c2248" stroke-width="2"/></svg>
  <svg viewBox="-41.600 -48 83.200 102"><path d="M12-37L24-18l14 40-22 14-24-16z" fill="#1b7df2"/><path d="M-15-38l24 16 28 14-10 20-32 24L-27 24-37-22z" fill="url(#gRD)"/><path d="M12-36l6 14H0zM28 0l11 22-22 14-12-14z" fill="#1b7df2"/><rect x="-22" y="-23" width="44" height="45" fill="#16100e"/><text x="-20" y="2" font-size="25" font-weight="700" fill="#fff" textLength="39" lengthAdjust="spacingAndGlyphs">RD</text><path d="M-18 14h16" stroke="#fff" stroke-width="3.500"/><circle class="run" cy="46" r="4"/></svg>
  <svg viewBox="-41.600 -48 83.200 102"><use href="#db" x="-38" y="-41" width="80" height="80"/><circle class="run" cy="46" r="4"/></svg>
  <i class="sep tall"></i>
  <svg viewBox="-41.600 -48 83.200 102"><path d="M-22-39H2l10 12v52h-34z" fill="#fff"/><path d="M-6-34h10" stroke="#333" stroke-width="7" stroke-dasharray="2 1"/><use href="#db" x="-37" y="-32" width="71" height="71"/></svg>
  <svg viewBox="-41.600 -48 83.200 102"><path d="M-26-26q10-12 18-6l6-6 6 6 8-4 4 8 9 4-4 8h-42z" fill="#dcdcda" stroke="#888"/><path d="M-14-30l4 8M-4-34l2 8M6-34l4 10M14-28l3 6" stroke="#444" stroke-width="3"/><path d="M-29-27q29 12 58 0l-6 57q-2 6-23 6t-23-6z" fill="url(#gTrash)" opacity=".93"/><path d="M-29-27q29 12 58 0" fill="none" stroke="#f5f5f5" stroke-width="2"/></svg>
</div>
</div>
</body>
</html>
```

FILE: styles.css
```css
* { box-sizing: border-box; }

body {
  margin: 0;
  width: 2880px;
  height: 1800px;
  overflow: hidden;
  display: flex;
  flex-direction: column;
  background: #1b2436;
  font-family: Inter, "Liberation Sans", sans-serif;
  color: #212529;
}

svg { display: block; overflow: visible; }
.defs { position: absolute; width: 0; height: 0; }
.serif { font-family: "Liberation Serif", serif; }
.mono { font-family: "DejaVu Sans Mono", monospace; }

/* system menu bar */
.menubar {
  flex: none;
  height: 44px;
  padding-left: 39px;
  display: grid;
  grid-template-columns: 70px 146px 81px 87px 99px 130px 181px 124px 141px 929px 53px 58px 48px 64px 70px 76px 64px 218px 64px 56px 82px;
  align-items: center;
  font-size: 28px;
  line-height: 44px;
  letter-spacing: -0.5px;
  white-space: nowrap;
  color: #1d2c3b;
  background: linear-gradient(90deg, #c5ddee 0%, #cbdff0 14%, #d8e4ee 20%, #d9e3ea 33%, #d3e1ee 44%, #e4e6ea 54%, #e5e6e9 60%, #d4e2ee 67%, #c8dff1 76%, #bcdaf1 86%, #bcdaf1 100%);
}
.apple { width: 33px; height: 33px; margin-top: -4px; }
.app { letter-spacing: -0.1px; }
.pct { font-size: 24px; letter-spacing: -0.9px; }
.clock { letter-spacing: -0.4px; }
.badge {
  width: 32px;
  height: 32px;
  border-radius: 4px;
  background: #14293a;
  color: #cfe3f4;
  font-size: 26px;
  line-height: 32px;
  text-align: center;
}

/* browser window */
.window {
  flex: none;
  height: 1650px;
  margin-top: 2px;
  border-radius: 10px;
  overflow: hidden;
  display: flex;
  flex-direction: column;
  background: #fff;
}

.tabstrip {
  flex: none;
  height: 84px;
  display: flex;
  align-items: flex-end;
  background: #dee1e6;
  box-shadow: inset 0 2px 0 #eff1f3;
}
.lights { width: 158.4px; height: 84px; padding: 31px 0 0 26px; display: flex; gap: 16px; }
.lights i { width: 24px; height: 24px; border-radius: 50%; border: 1px solid rgba(0, 0, 0, .12); }
.red { background: #fe5f57; }
.amber { background: #febc3e; }
.green { background: #33c748; }

.tab {
  width: 318.6px;
  height: 68px;
  padding: 0 20px 0 23px;
  display: flex;
  align-items: center;
  font-size: 24px;
  letter-spacing: -0.3px;
  color: #45494d;
  background: linear-gradient(#80868b, #80868b) right 15px / 2px 40px no-repeat;
}
.tab.wide { width: 319.6px; padding: 0 20px 0 21.500px; }
.tab.narrow { width: 315.6px; padding: 0 19px 0 22px; background: none; }
.tab.active {
  position: relative;
  background: #fff;
  border-radius: 16px 16px 0 0;
}
.tab.active::before,
.tab.active::after {
  content: "";
  position: absolute;
  bottom: 0;
  width: 16px;
  height: 16px;
}
.tab.active::before { left: -16px; background: radial-gradient(circle at 0 0, transparent 15.500px, #fff 16px); }
.tab.active::after { right: -16px; background: radial-gradient(circle at 100% 0, transparent 15.500px, #fff 16px); }
.fav { flex: none; width: 32px; height: 32px; margin-right: 16px; }
.tab span {
  flex: 1;
  white-space: nowrap;
  margin-right: 12px;
  line-height: 40px;
}
.tab.fade span {
  letter-spacing: -0.450px;
  -webkit-mask-image: linear-gradient(90deg, #000 78%, rgba(0, 0, 0, .1));
  mask-image: linear-gradient(90deg, #000 78%, rgba(0, 0, 0, .1));
}
.x { flex: none; width: 24px; height: 24px; }
.plus { width: 26px; height: 26px; margin: 0 0 21px 32px; }

.toolbar {
  flex: none;
  height: 72px;
  padding: 0 40px 0 28px;
  display: flex;
  align-items: center;
}
.nav { flex: none; width: 32px; height: 32px; margin-right: 32px; }
.omnibox {
  flex: none;
  width: 1909px;
  height: 56px;
  margin-left: -4px;
  padding: 0 19px 0 22px;
  border-radius: 28px;
  background: #f1f3f4;
  display: flex;
  align-items: center;
}
.url { flex: 1; margin-left: 18px; font-size: 28px; letter-spacing: -0.15px; color: #80868b; }
.url b { font-weight: 400; letter-spacing: 0.200px; color: #202124; }
.exts { flex: none; display: flex; gap: 32px; margin-left: 29px; }
.exts svg { width: 32px; height: 32px; }
.divider { flex: none; width: 2px; height: 32px; margin-left: 27px; background: #d0d3d6; }
.avatar {
  flex: none;
  width: 40px;
  height: 40px;
  margin: 0 40px 0 25px;
  border-radius: 50%;
  background: #f4511e;
  color: #fff;
  font-size: 24px;
  line-height: 40px;
  text-align: center;
}

.bookmarks {
  flex: none;
  height: 66px;
  padding: 0 0 9px 28px;
  display: grid;
  grid-template-columns: 132px 154px 120px 160px 132px 184px 110px 128px 302px 308px 308px 308px 306px;
  align-items: center;
  border-bottom: 2px solid #c4c4c6;
  font-size: 24px;
  letter-spacing: -0.1px;
  white-space: nowrap;
  color: #3c4043;
}
.bookmarks div { display: flex; align-items: center; gap: 16px; }
.bookmarks svg { flex: none; width: 32px; height: 32px; }

/* admin page */
.page {
  flex: 1;
  padding: 38px 330px 0;
  background: linear-gradient(90deg, #fff 0, transparent 140px, transparent 2740px, #fff 2880px),
              linear-gradient(#fff 0, #fff 95.500%, #f5f5f5 98%, #ebebeb 100%);
}
.top { display: flex; justify-content: space-between; align-items: flex-start; padding-right: 176px; }
h1 { margin: 0 0 0 -1px; font-size: 68px; line-height: 82px; letter-spacing: -2.600px; color: #5a5a5a; }
.top p { margin: -9px 0 0; font-size: 32px; line-height: 48px; letter-spacing: -0.680px; }
.top a { color: #007bff; }

.links {
  display: flex;
  margin-top: 60px;
  font-family: "DejaVu Serif", serif;
  font-size: 24px;
  line-height: 36px;
  text-transform: uppercase;
  color: #000;
  -webkit-text-stroke: 0.500px #000;
}
.home { width: 157px; letter-spacing: 4.300px; }
.user { width: 144px; letter-spacing: 3.600px; }
.category { width: 242px; letter-spacing: 5.800px; }
.product { letter-spacing: 4.900px; }

h2 {
  margin: 269px 0 226px;
  font: 700 64px/77px "DejaVu Serif", serif;
  letter-spacing: 3.300px;
  text-align: center;
  text-transform: uppercase;
  color: #000;
  -webkit-text-stroke: 1px #000;
}

table {
  width: 2160px;
  margin: 0 30px;
  table-layout: fixed;
  border-collapse: collapse;
  font: 32px/48px Roboto, sans-serif;
}
.c1 { width: 152px; }
.c2 { width: 714px; }
.c3 { width: 884px; }
.c4 { width: 150px; }
th, td { padding: 0 0 3px; border: 2px solid #ddd; text-align: center; }
th { height: 98px; background: #8bc7bd; color: #fff; letter-spacing: 0.200px; }
td { height: 82px; background: #f1f1f1; }

.stray { margin: 225px 0 31px; font-size: 32px; line-height: 48px; }
footer {
  padding-top: 33px;
  border-top: 2px solid #e5e5e5;
  font-size: 32px;
  line-height: 48px;
  letter-spacing: -0.860px;
}

/* desktop and dock */
.desktop {
  flex: 1;
  padding: 2px 66px 0;
  background:
    linear-gradient(#1c0c2c 0 2px, rgba(50, 30, 12, .6) 2px, rgba(60, 35, 15, .12) 40px, transparent 60px),
    linear-gradient(90deg, #c49a70, #c39762);
}
.dock {
  height: 102px;
  padding-left: 6.200px;
  border-radius: 10px 10px 0 0;
  display: flex;
  align-items: center;
  background: linear-gradient(#b58e65, #cf9e6b);
}
.dock svg { flex: none; width: 83.200px; height: 102px; }
.run { fill: #4a1c00; }
.sep { flex: none; width: 2px; height: 50px; margin: 0 17.450px; background: #946538; }
.sep.tall { height: 74px; }
```
